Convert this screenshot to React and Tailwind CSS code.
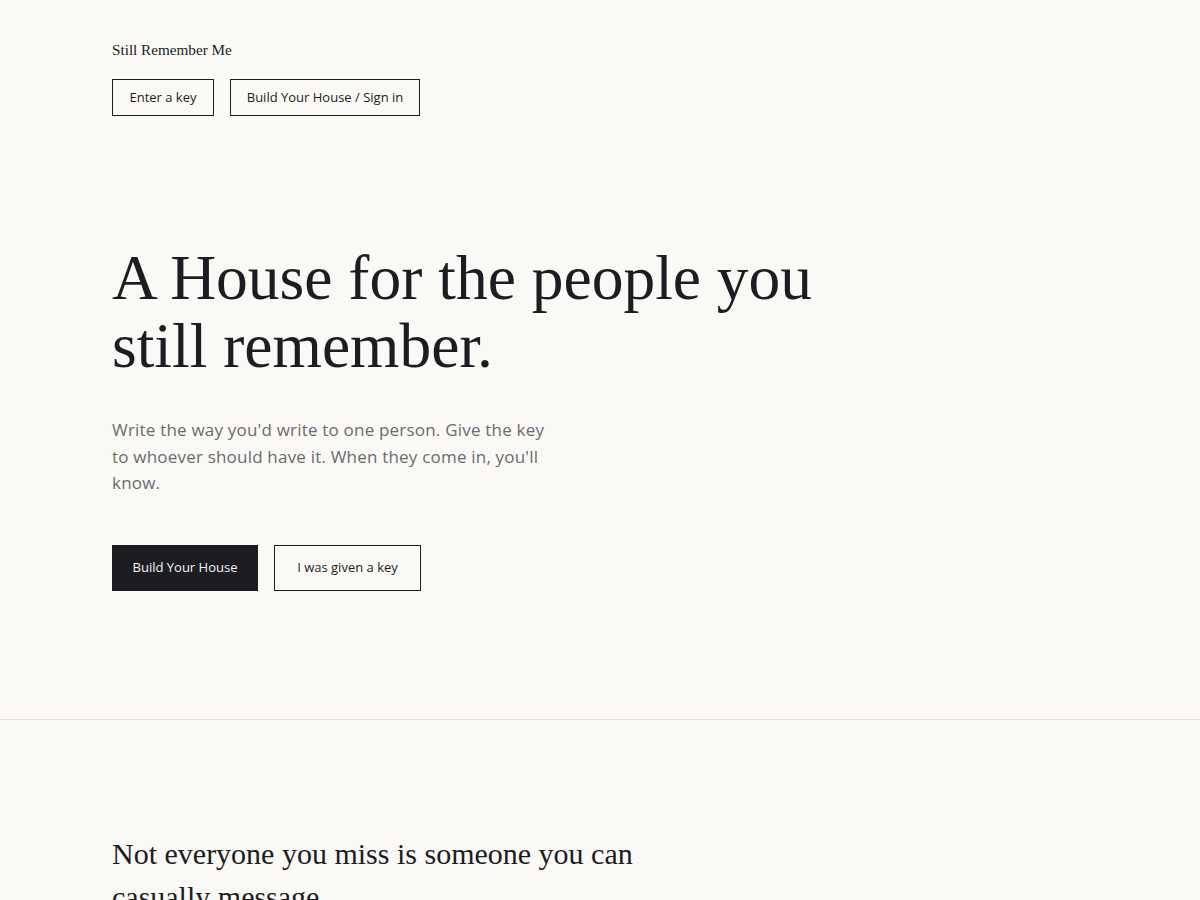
import React from 'react';

const App = () => {
  return (
    <div className="min-h-screen w-full bg-[#faf9f6] text-[#1c1d21] font-['Open_Sans',sans-serif]">
      {/* Header */}
      <header className="px-[112px] pt-[39px]">
        <p className="text-[15.2px] leading-[21px] text-[#1c1d21] font-['Liberation_Serif',serif]">Still Remember Me</p>
        <div className="mt-[19px] flex items-center gap-4">
          <button className="h-[37px] w-[102px] border border-[#1c1d21] text-[13px] text-[#1c1d21]">Enter a key</button>
          <button className="h-[37px] w-[190px] border border-[#1c1d21] text-[13px] text-[#1c1d21]">Build Your House / Sign in</button>
        </div>
      </header>

      {/* Hero */}
      <section className="px-[112px] pt-[128px] pb-[128px] border-b border-[#e2dfda]">
        <h1 className="text-[63.5px] leading-[68px] text-[#1c1d21] font-['Liberation_Serif',serif] max-w-[760px]">
          A House for the people you still remember.
        </h1>
        <p className="mt-[37px] max-w-[445px] text-[17px] leading-[26.5px] text-[#6b6b6e] tracking-[0.2px]">
          Write the way you'd write to one person. Give the key to whoever should have it. When they come in, you'll know.
        </p>
        <div className="mt-[48px] flex items-center gap-4">
          <button className="h-[46px] w-[146px] bg-[#1c1d21] text-[#f5f4f0] text-[13px]">Build Your House</button>
          <button className="h-[46px] w-[147px] border border-[#1c1d21] text-[13px] text-[#1c1d21]">I was given a key</button>
        </div>
      </section>

      {/* Second section */}
      <section className="px-[112px] pt-[112px] pb-20">
        <h2 className="text-[30px] leading-[43px] max-w-[540px] text-[#1c1d21] font-['Liberation_Serif',serif]">
          Not everyone you miss is someone you can casually message.
        </h2>
      </section>
    </div>
  );
};

export default App;
